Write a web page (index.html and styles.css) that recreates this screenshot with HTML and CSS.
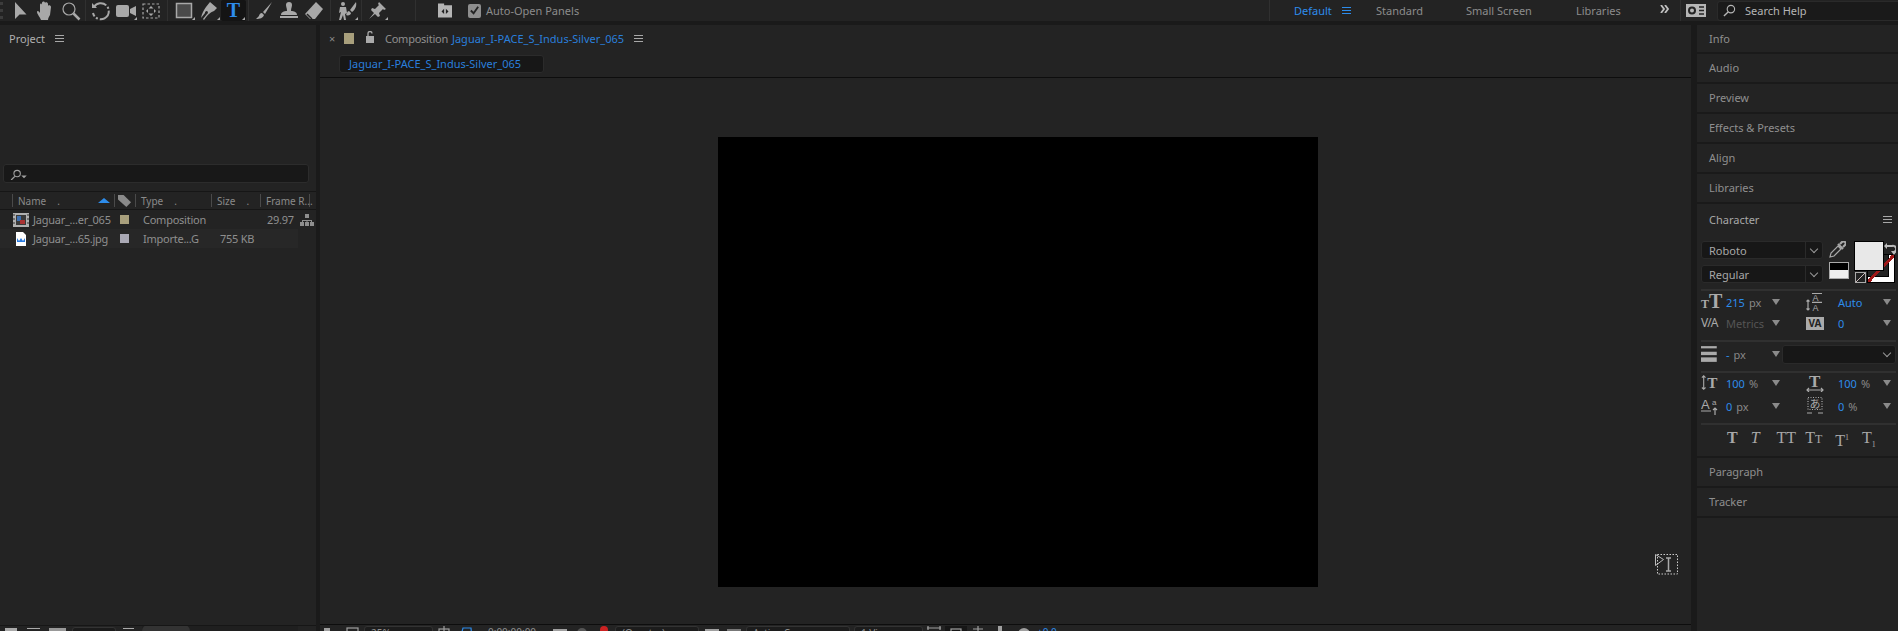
FILE: index.html
```html
<!DOCTYPE html>
<html lang="en">
<head>
  <meta charset="UTF-8" />
  <title>After Effects</title>
  <link rel="stylesheet" href="styles.css">
</head>
<body>

  <header class="toolbar">
    <div class="grip"></div>
    <div class="tool"><svg viewBox="0 0 20 20"><path d="M4 1v17l4.500-4.500h7z"/></svg></div>
    <div class="tool"><svg viewBox="0 0 20 20"><path d="M5 19c-1-3-4-6-4-8s2-1 3 1V4c0-2 2-2 2 0V2c0-2 3-2 3 0v0c0-1 3-1 3 1v2c0-1 3-1 3 1l-1 8c-1 2-2 3-2 5z"/></svg></div>
    <div class="tool"><svg viewBox="0 0 20 20" class="line"><circle cx="8" cy="8" r="6"/><path d="M12.500 12.500l6 6" stroke-width="2.500"/></svg></div>
    <span class="sep"></span>
    <div class="tool"><svg viewBox="0 0 20 20" class="line"><path d="M3 6a8 8 0 1 1-1 6" stroke-width="2" stroke-dasharray="14 2 2 2"/><path d="M1 2v5h5" fill="currentColor" stroke="none"/></svg></div>
    <div class="tool more"><svg viewBox="0 0 20 20"><rect x="0" y="4" width="13" height="12" rx="2"/><path d="M14 8l6-3v10l-6-3z"/></svg></div>
    <div class="tool"><svg viewBox="0 0 20 20" class="line"><rect x="2" y="3" width="16" height="14" stroke-dasharray="2.500 2"/><path d="M10 5l-2.500 2.500h5zM10 15l-2.500-2.500h5zM5 10l2-2v4zM15 10l-2-2v4z" fill="currentColor" stroke="none"/></svg></div>
    <span class="sep wide"></span>
    <div class="tool more"><svg viewBox="0 0 20 20" class="line"><rect x="2.500" y="2.500" width="15" height="14" fill="#4a4a4a" stroke-width="1.500"/></svg></div>
    <div class="tool more"><svg viewBox="0 0 20 20"><path d="M11 1l7 6-3 3c-3 1-6 3-10 9l-1-1 4-5a1.500 1.500 0 1 0-2-1l-4 5c1-5 3-8 5-11z"/></svg></div>
    <div class="tool more active"><span class="type-tool">T</span></div>
    <span class="sep"></span>
    <div class="tool"><svg viewBox="0 0 20 20"><path d="M18 1L9 11l2 2zM8 12c-2 0-3 2-3 3l-3 3c4 0 7-1 8-4z"/></svg></div>
    <div class="tool"><svg viewBox="0 0 20 20"><rect x="1" y="15" width="18" height="2"/><path d="M7 4a3 3 0 1 1 6 0c0 2-1 3-1 6 3 0 6 1 6 4H2c0-3 3-4 6-4 0-3-1-4-1-6z"/></svg></div>
    <div class="tool"><svg viewBox="0 0 20 20"><path d="M12 1l7 7-8 10H6l-5-5z"/><path d="M3 13l5 5" stroke="#232323" stroke-width="1.500"/></svg></div>
    <span class="sep wide"></span>
    <div class="tool more"><svg viewBox="0 0 20 20"><circle cx="6" cy="3" r="2"/><path d="M3 6h6l1 6-2 1 1 6H7l-1-5-2 5H2l2-8-2 1zM19 1l-6 8 2 2c3-2 5-6 4-10zM12 10c-2 0-2 3-3 4 2 1 5 0 5-2z"/></svg></div>
    <span class="sep"></span>
    <div class="tool more"><svg viewBox="0 0 20 20"><path d="M12 1l7 7-2 1-1-1-4 4 1 3-2 1-3-3-6 5 5-6-3-3 1-2 3 1 4-4-1-1z"/></svg></div>
    <span class="sep far"></span>
    <div class="panels-btn"><svg viewBox="0 0 16 16"><path d="M0 0h7v2h9v14H0z"/><path d="M7 6L4 9l3 3zM9 6l3 3-3 3z" fill="#232323"/></svg></div>
    <label class="auto-open"><span class="check"><svg viewBox="0 0 12 12" class="line"><path d="M2 6l3 3 5-7" stroke-width="2"/></svg></span>Auto-Open Panels</label>

    <nav class="workspaces">
      <a class="current">Default</a>
      <span class="menu-icon blue"></span>
      <a>Standard</a>
      <a>Small Screen</a>
      <a>Libraries</a>
      <svg class="chevrons line" viewBox="0 0 10 8"><path d="M1 0l3 4-3 4M5 0l3 4-3 4" stroke-width="1.800"/></svg>
    </nav>
    <span class="sep-plain"></span>
    <div class="sync-btn"><svg viewBox="0 0 20 13"><rect width="20" height="13" fill="#b5b5b5"/><circle cx="6" cy="6.500" r="3" fill="none" stroke="#232323" stroke-width="2"/><path d="M13 3h5M13 6.500h5M13 10h5" stroke="#232323" stroke-width="1.500"/></svg></div>
    <div class="help-search">
      <svg viewBox="0 0 14 14" class="line"><circle cx="8.500" cy="5.500" r="4"/><path d="M5.500 8.500L1 13" stroke-width="1.500"/></svg>
      <span>Search Help</span>
    </div>
  </header>

  <main class="workspace">

    <section class="project">
      <div class="panel-title"><span class="title-text">Project</span><span class="menu-icon"></span></div>
      <div class="project-preview"></div>
      <div class="project-search">
        <svg viewBox="0 0 18 12" class="line"><circle cx="7.500" cy="5" r="3.500"/><path d="M5 8L1 12" stroke-width="1.400"/><path d="M12 7h6l-3 3z" fill="currentColor" stroke="none"/></svg>
      </div>

      <div class="file-head">
        <span class="col-name">Name<i>.</i><b class="sort-arrow"></b></span>
        <span class="col-tag"><svg viewBox="0 0 14 14"><path d="M0 1h6l8 8-5 5-9-8z"/></svg></span>
        <span class="col-type">Type<i>.</i></span>
        <span class="col-size">Size<i>.</i></span>
        <span class="col-rate">Frame R...</span>
      </div>

      <div class="file-row">
        <span class="file-icon"><svg viewBox="0 0 16 14"><rect width="16" height="14" fill="#b0b0b0"/><rect x="3" y="2" width="10" height="10" fill="#3a3a3a"/><rect x="4" y="3" width="4" height="5" fill="#3d6fb0"/><rect x="7" y="7" width="5" height="4" fill="#a33"/><path d="M1 1v2M1 5v2M1 9v2M15 1v2M15 5v2M15 9v2" stroke="#333"/></svg></span>
        <span class="file-name">Jaguar_...er_065</span>
        <span class="swatch comp"></span>
        <span class="file-type">Composition</span>
        <span class="file-size"></span>
        <span class="file-rate">29.97</span>
        <span class="flow-icon"><svg viewBox="0 0 14 12"><rect x="5" y="0" width="4" height="4"/><rect x="0" y="8" width="4" height="4"/><rect x="5" y="8" width="4" height="4"/><rect x="10" y="8" width="4" height="4"/><path d="M7 4v2H2v2h1V7h3.500v1h1V7H11v1h1V6H7z"/></svg></span>
      </div>
      <div class="file-row alt">
        <span class="file-icon"><svg viewBox="0 0 16 14"><path d="M3 0h7l3 3v11H3z" fill="#fff"/><path d="M4 6l2 3 2-3 2 3 2-3v4H4z" fill="#2a7be0"/></svg></span>
        <span class="file-name">Jaguar_...65.jpg</span>
        <span class="swatch still"></span>
        <span class="file-type">Importe...G</span>
        <span class="file-size">755 KB</span>
      </div>

      <div class="project-spacer"></div>
      <div class="project-foot">
        <span class="foot-icon flat"></span>
        <span class="foot-icon folder"></span>
        <span class="foot-icon comp-btn"></span>
        <span class="foot-drop"></span>
        <span class="foot-icon trash"></span>
        <div class="foot-scroll"><span></span></div>
      </div>
    </section>

    <section class="composition">
      <div class="comp-title">
        <span class="close">×</span>
        <span class="swatch comp big"></span>
        <svg class="lock" viewBox="0 0 10 12"><rect x="1" y="5" width="8" height="7"/><path d="M3 5V2.500a2 2 0 0 1 4 0" fill="none" stroke="currentColor" stroke-width="1.300"/></svg>
        <span class="title-text">Composition</span>
        <a class="comp-name">Jaguar_I-PACE_S_Indus-Silver_065</a>
        <span class="menu-icon"></span>
      </div>
      <div class="comp-tabs"><a class="comp-tab">Jaguar_I-PACE_S_Indus-Silver_065</a></div>
      <div class="viewer"><div class="canvas"></div></div>
      <div class="viewer-foot">
        <span class="vf-icon"><svg viewBox="0 0 14 14"><rect x="0" y="2" width="6" height="10"/><rect x="7" y="6" width="2" height="6"/></svg></span>
        <span class="vf-icon"><svg viewBox="0 0 14 14" class="line"><rect x="1" y="2" width="11" height="11"/></svg></span>
        <span class="vf-drop zoom-drop">25%</span>
        <span class="vf-icon"><svg viewBox="0 0 14 14" class="line"><rect x="2" y="3" width="10" height="10"/><path d="M7 0v14M0 7h14"/></svg></span>
        <span class="vf-icon blue"><svg viewBox="0 0 14 14" class="line"><path d="M1 13L4 2h8l1 11"/></svg></span>
        <span class="vf-time">0:00:00:00</span>
        <span class="vf-icon"><svg viewBox="0 0 14 14"><rect x="0" y="3" width="14" height="11"/></svg></span>
        <span class="vf-icon dim"><svg viewBox="0 0 14 14"><circle cx="7" cy="7" r="5"/></svg></span>
        <span class="vf-icon"><svg viewBox="0 0 14 14"><circle cx="7" cy="4" r="4" fill="#c22"/><circle cx="4" cy="11" r="3" fill="#3a3"/><circle cx="10" cy="11" r="3" fill="#26c"/></svg></span>
        <span class="vf-drop quality-drop">(Quarter)</span>
        <span class="vf-icon"><svg viewBox="0 0 14 14"><rect x="0" y="3" width="14" height="11"/></svg></span>
        <span class="vf-icon"><svg viewBox="0 0 14 14"><rect x="0" y="3" width="14" height="11" fill="#777"/></svg></span>
        <span class="vf-drop camera-drop">Active Camera</span>
        <span class="vf-drop view-drop">1 View</span>
        <span class="vf-icon"><svg viewBox="0 0 14 14" class="line"><path d="M0 2h14M1 0v4M13 0v4"/></svg></span>
        <span class="vf-icon on"><svg viewBox="0 0 14 14" class="line"><rect x="2" y="3" width="10" height="10"/></svg></span>
        <span class="vf-icon"><svg viewBox="0 0 14 14" class="line"><path d="M2 3h10M7 0v14"/></svg></span>
        <span class="vf-icon"><svg viewBox="0 0 14 14"><rect x="5" y="0" width="4" height="8"/></svg></span>
        <span class="vf-icon wide-gap"><svg viewBox="0 0 14 14"><circle cx="7" cy="8" r="6"/></svg></span>
        <span class="vf-value">+0.0</span>
      </div>
      <div class="type-cursor">
        <svg viewBox="0 0 24 21">
          <path d="M0.500 0.500v11l8-6z" fill="#222" stroke="#bbb"/>
          <rect x="2.500" y="0.500" width="20" height="19.500" fill="none" stroke="#ccc" stroke-dasharray="1.500 1.500"/>
          <path d="M11 4h5M11 17h5M13.500 4v13" fill="none" stroke="#aaa" stroke-width="1.500"/>
        </svg>
      </div>
    </section>

    <aside class="side">
      <div class="side-row">Info</div>
      <div class="side-row">Audio</div>
      <div class="side-row">Preview</div>
      <div class="side-row">Effects &amp; Presets</div>
      <div class="side-row">Align</div>
      <div class="side-row">Libraries</div>

      <section class="character">
        <div class="char-title"><span>Character</span><span class="menu-icon"></span></div>

        <div class="font-block">
          <div class="font-selects">
            <div class="select">Roboto</div>
            <div class="select">Regular</div>
          </div>
          <div class="picker-tools">
            <svg viewBox="0 0 17 17" class="line"><path d="M1 16l1-4 7-7 3 3-7 7z"/><path d="M9 3l5 5M11 3l2-2a2 2 0 0 1 3 3l-2 2" stroke-width="2.200"/></svg>
            <span class="fill-none"></span>
          </div>
          <div class="colors">
            <span class="stroke-swatch"></span>
            <span class="fill-swatch"></span>
            <span class="mini-swatch"></span>
            <svg class="swap" viewBox="0 0 12 12"><path d="M2 3h6a3 3 0 0 1 2 6" fill="none" stroke="#bbb" stroke-width="2"/><path d="M3 0v6L0 3zM7 8h6l-3 4z" fill="#bbb"/></svg>
          </div>
        </div>

        <div class="char-fields size-rows">
          <div class="field"><span class="f-icon serif big">T<small>T</small></span><b>215</b><em>px</em><i class="caret"></i></div>
          <div class="field right"><span class="f-icon"><svg viewBox="0 0 18 18" class="line"><path d="M2 7v10M.5 8.500L2 7l1.500 1.500M.5 15.500L2 17l1.500-1.500"/><text x="6.500" y="8" font-size="9">A</text><text x="6.500" y="17.500" font-size="9">A</text><path d="M6 9.300h10M6 .5h10"/></svg></span><b>Auto</b><i class="caret"></i></div>
          <div class="field"><span class="f-icon tracking">V/A</span><em class="dim">Metrics</em><i class="caret"></i></div>
          <div class="field right"><span class="f-icon boxed">VA</span><b>0</b><i class="caret"></i></div>
        </div>

        <div class="char-fields stroke-row">
          <div class="field"><span class="f-icon"><svg viewBox="0 0 16 14"><rect y="0" width="14" height="2"/><rect y="5" width="14" height="3"/><rect y="10" width="14" height="4"/></svg></span><b>-</b><em>px</em><i class="caret"></i></div>
          <div class="select plain"></div>
        </div>

        <div class="char-fields scale-rows">
          <div class="field"><span class="f-icon"><svg viewBox="0 0 20 18" class="line"><path d="M3 1v15M1 3l2-2 2 2M1 14l2 2 2-2"/><text class="st" x="7" y="15" font-size="17">T</text></svg></span><b>100</b><em>%</em><i class="caret"></i></div>
          <div class="field right"><span class="f-icon"><svg viewBox="0 0 18 18" class="line"><text class="st" x="3" y="13" font-size="17">T</text><path d="M1 16h16M3 14l-2 2 2 2M15 14l2 2-2 2"/></svg></span><b>100</b><em>%</em><i class="caret"></i></div>
          <div class="field"><span class="f-icon"><svg viewBox="0 0 18 18" class="line"><text x="0" y="12" font-size="13">A</text><text x="11" y="8" font-size="8">a</text><path d="M0 14h10M14 18v-7M12 13l2-2 2 2"/></svg></span><b>0</b><em>px</em><i class="caret"></i></div>
          <div class="field right"><span class="f-icon"><svg viewBox="0 0 18 18" class="line"><rect x="2" y=".5" width="14" height="12" stroke-dasharray="1 1.500"/><text class="kana" x="3.500" y="10.500" font-size="11">あ</text><path d="M1 16h5M12 16h5" /></svg></span><b>0</b><em>%</em><i class="caret"></i></div>
        </div>

        <div class="char-fields styles">
          <span class="bold">T</span>
          <span class="italic">T</span>
          <span class="all-caps">TT</span>
          <span>T<small>T</small></span>
          <span>T<sup>1</sup></span>
          <span>T<sub>1</sub></span>
        </div>
      </section>

      <div class="side-row">Paragraph</div>
      <div class="side-row">Tracker</div>
    </aside>

  </main>

</body>
</html>
```

FILE: styles.css
```css
* { margin: 0; padding: 0; box-sizing: border-box; }
html, body { height: 631px; overflow: hidden; }
body { font-family: "Noto Sans", sans-serif; font-size: 11px; background: #1a1a1a; color: #9a9a9a; }
svg { display: block; fill: currentColor; }
svg.line { fill: none; stroke: currentColor; stroke-width: 1.2; }
svg.line text { fill: currentColor; stroke: none; font-family: "Liberation Sans", sans-serif; }
svg.line text.st { font-family: "Liberation Serif", serif; font-weight: bold; }
svg.line text.kana { font-family: "Noto Sans CJK JP", sans-serif; }
a { text-decoration: none; }

/* top bar */
.toolbar { display: flex; align-items: center; height: 21px; background: #232323; color: #a8a8a8; overflow: hidden; }
.grip { width: 3px; height: 17px; margin-right: 5px; border-left: 3px dotted #3c3c3c; }
.tool { position: relative; display: flex; align-items: center; justify-content: center; width: 25px; height: 21px; flex: none; }
.tool svg { width: 20px; height: 20px; }
.tool.more::after { content: ""; position: absolute; right: 1px; bottom: 1px; border-style: solid; border-width: 0 0 3px 3px; border-color: transparent transparent #aaa transparent; }
.tool.active { background: #141414; border-radius: 2px; }
.type-tool { font-family: "Liberation Serif", serif; font-weight: bold; font-size: 20px; line-height: 21px; color: #2d8ceb; }
.sep { width: 1px; height: 21px; margin: 0 2px; background: #303030; flex: none; }
.sep.wide { margin: 0 3px 0 4px; }
.sep.far { margin: 0 0 0 26px; }
.panels-btn { width: 14px; margin-left: 22px; color: #b5b5b5; flex: none; }
.panels-btn svg { width: 14px; height: 15px; }
.auto-open { display: flex; align-items: center; margin-left: 16px; gap: 5px; font-size: 11px; color: #8c8c8c; white-space: nowrap; }
.check { width: 13px; height: 14px; border-radius: 2px; background: #8e8e8e; color: #232323; padding: 1px; }
.check svg { width: 11px; height: 11px; }

.workspaces { display: grid; grid-template-columns: 48px 34px 90px 110px 84px 20px; align-items: center; height: 21px; margin-left: auto; padding-left: 24px; border-left: 1px solid #303030; font-size: 11px; color: #8c8c8c; }
.workspaces .current { color: #2d8ceb; }
.chevrons { width: 10px; height: 8px; margin-top: -3px; color: #c0c0c0; }
.sep-plain { width: 1px; height: 21px; background: #303030; flex: none; }
.sync-btn { width: 20px; margin: 0 11px 0 5px; flex: none; }
.sync-btn svg { width: 20px; height: 13px; }
.help-search { display: flex; align-items: center; gap: 9px; width: 181px; height: 20px; padding-left: 5px; background: #1a1a1a; border-radius: 3px 0 0 3px; border: 1px solid #2a2a2a; border-right: 0; color: #b5b5b5; font-size: 11px; flex: none; }
.help-search svg { width: 13px; height: 13px; }

.menu-icon { display: block; width: 9px; height: 7px; border-top: 1px solid #a8a8a8; border-bottom: 1px solid #a8a8a8; position: relative; }
.menu-icon::after { content: ""; position: absolute; left: 0; right: 0; top: 2px; height: 1px; background: #a8a8a8; }
.menu-icon.blue { border-color: #2d8ceb; }
.menu-icon.blue::after { background: #2d8ceb; }

/* panels */
.workspace { display: flex; height: 606px; margin-top: 4px; gap: 4px; }
.project { display: flex; flex-direction: column; width: 316px; background: #232323; flex: none; }
.composition { position: relative; display: flex; flex-direction: column; width: 1371px; background: #232323; flex: none; }
.side { width: 201px; margin-left: 2px; background: #232323; flex: none; }

.panel-title { display: flex; align-items: center; gap: 10px; height: 27px; padding-left: 9px; color: #b0b0b0; }
.project-preview { height: 112px; }
.project-search { height: 19px; margin: 0 7px 0 3px; padding: 4px 6px; background: #181818; border: 1px solid #2c2c2c; border-radius: 3px; color: #a0a0a0; }
.project-search svg { width: 17px; height: 11px; }

.file-head { display: grid; grid-template-columns: 102px 21px 76px 49px 50px; align-items: center; height: 19px; margin-top: 8px; margin-left: 12px; padding-right: 5px; background: #232323; position: relative; font-size: 10px; color: #8a8a8a; }
.file-head::before { content: ""; position: absolute; top: 0; bottom: 0; left: -12px; right: 0; border-top: 1px solid #161616; border-bottom: 1px solid #161616; }
.file-head > span { display: flex; align-items: center; height: 13px; border-left: 1px solid #4a4a4a; padding-left: 5px; white-space: nowrap; }
.file-head > span:last-child { border-right: 1px solid #4a4a4a; width: 50px; }
.file-head i { margin-left: 11px; font-style: normal; }
.sort-arrow { margin-left: auto; margin-right: 4px; border-style: solid; border-width: 0 6px 5px 6px; border-color: transparent transparent #2d8ceb transparent; }
.col-tag { color: #8a8a8a; padding-left: 3px !important; }
.col-tag svg { width: 13px; height: 13px; }

.file-row { display: grid; grid-template-columns: 13px 16px 4px 87px 10px 13px 77px 47px 33px 14px; align-items: center; width: 314px; height: 19px; font-size: 11px; letter-spacing: -0.25px; color: #8f8f8f; white-space: nowrap; }
.file-row.alt { width: 298px; background: #272727; }
.file-icon { grid-column: 2; }
.file-icon svg { width: 16px; height: 14px; }
.file-name { grid-column: 4; }
.file-row .swatch { grid-column: 5; }
.file-type { grid-column: 7; }
.file-size { grid-column: 8; }
.file-rate { grid-column: 9; }
.flow-icon { grid-column: 10; }
.flow-icon svg { width: 14px; height: 12px; }
.swatch { display: block; width: 9px; height: 9px; }
.swatch.comp { background: #a89f7c; }
.swatch.still { background: #aaa9b5; }
.swatch.big { width: 10px; height: 11px; }
.project-spacer { flex: 1; }
.project-foot { display: flex; align-items: flex-start; height: 6px; border-top: 1px solid #161616; padding-left: 5px; overflow: hidden; }
.foot-icon { display: block; height: 6px; margin-top: 2px; flex: none; }
.foot-icon.flat { width: 12px; background: #aaa; }
.foot-icon.folder { width: 13px; margin-left: 10px; border-top: 1px solid #aaa; }
.foot-icon.comp-btn { width: 17px; margin-left: 9px; background: #999; }
.foot-drop { width: 44px; height: 6px; margin: 1px 0 0 6px; border: 1px solid #333; background: #1b1b1b; border-radius: 3px 3px 0 0; flex: none; }
.foot-icon.trash { width: 11px; margin-left: 7px; border-top: 1px solid #aaa; }
.foot-scroll { width: 156px; height: 6px; margin-left: 8px; margin-top: -1px; background: #1f1f1f; flex: none; }
.foot-scroll span { display: block; width: 48px; height: 6px; background: #333; border-radius: 6px 6px 0 0; }

.comp-title { display: flex; align-items: center; height: 27px; padding-left: 9px; color: #8f8f8f; }
.close { width: 15px; font-size: 11px; color: #888; }
.lock { width: 10px; height: 12px; margin: -4px 0 0 11px; color: #aaa; }
.comp-title .title-text { margin-left: 10px; letter-spacing: -0.25px; }
.comp-name { margin-left: 4px; color: #2a7fdc; }
.comp-title .menu-icon { margin-left: 10px; }
.comp-tabs { height: 26px; padding: 3px 0 0 19px; border-bottom: 1px solid #0d0d0d; }
.comp-tab { display: block; width: 205px; height: 18px; padding-left: 9px; line-height: 16px; color: #2a7fdc; background: #171717; border: 1px solid #2b2b2b; border-radius: 3px; }
.viewer { flex: 1; padding: 59px 0 0 398px; }
.canvas { width: 600px; height: 450px; background: #000; }

.viewer-foot { display: flex; align-items: flex-start; height: 7px; border-top: 1px solid #0d0d0d; padding-top: 1px; overflow: hidden; font-size: 10px; line-height: 12px; color: #8f8f8f; white-space: nowrap; }
.vf-icon { display: block; width: 22px; padding: 0 4px; color: #a0a0a0; flex: none; }
.vf-icon.blue { color: #2d8ceb; }
.vf-icon.dim { color: #555; }
.vf-icon.on { background: #161616; }
.vf-icon.wide-gap { margin-left: 2px; }
.vf-icon svg { width: 14px; height: 14px; }
.vf-drop { display: block; height: 16px; padding: 0 0 0 6px; border: 1px solid #333; border-radius: 3px; background: #1c1c1c; flex: none; }
.zoom-drop { width: 69px; }
.quality-drop { width: 84px; margin-right: 2px; }
.camera-drop { width: 104px; margin-left: 1px; }
.view-drop { width: 69px; margin-left: 4px; }
.vf-time { width: 72px; padding-left: 11px; flex: none; }
.vf-value { color: #2d8ceb; margin-left: 2px; }

.type-cursor { position: absolute; left: 1335px; top: 529px; width: 24px; height: 21px; }

/* right column */
.side-row { display: flex; align-items: center; height: 30px; padding: 0 0 1px 12px; border-bottom: 2px solid #1a1a1a; color: #8f8f8f; }
.side-row:first-child { height: 29px; }
.character { height: 254px; border-bottom: 2px solid #1a1a1a; }
.char-title { display: flex; align-items: center; justify-content: space-between; height: 30px; padding: 0 6px 0 12px; color: #a8a8a8; }
.font-block { display: flex; height: 43px; padding-left: 4px; margin-top: 7px; }
.font-selects { display: flex; flex-direction: column; gap: 6px; width: 122px; flex: none; }
.select { height: 18px; padding-left: 7px; line-height: 17px; background: #171717; border: 1px solid #2a2a2a; border-radius: 3px; color: #a8a8a8; position: relative; }
.select::after { content: ""; position: absolute; right: 5px; top: 4px; width: 5px; height: 5px; border-right: 1px solid #999; border-bottom: 1px solid #999; transform: rotate(45deg); }
.select::before { content: ""; position: absolute; right: 16px; top: 0; bottom: 0; width: 1px; background: #2a2a2a; }
.select.plain { width: 114px; height: 19px; }
.select.plain::before { display: none; }
.picker-tools { display: flex; flex-direction: column; gap: 4px; margin-left: 6px; width: 20px; color: #a8a8a8; flex: none; }
.picker-tools svg { width: 17px; height: 17px; }
.fill-none { display: block; width: 20px; height: 17px; border: 1px solid #aaa; background: linear-gradient(#000 50%, #eee 50%); }
.colors { position: relative; width: 42px; margin-left: 5px; flex: none; }
.fill-swatch { position: absolute; left: 0; top: 0; width: 30px; height: 30px; background: #e8e8e8; border: 1px solid #000; }
.stroke-swatch { position: absolute; left: 13px; top: 13px; width: 28px; height: 29px; border: 1px solid #000; background: #fff; }
.stroke-swatch::before { content: ""; position: absolute; left: -1px; top: -1px; width: 20px; height: 21px; background: #232323; border: 1px solid #000; }
.stroke-swatch::after { content: ""; position: absolute; inset: 0; background: linear-gradient(to bottom right, transparent 46%, #a01818 46%, #a01818 54%, transparent 54%); }
.mini-swatch { position: absolute; left: 1px; top: 31px; width: 11px; height: 11px; border: 1px solid #aaa; background: linear-gradient(to bottom right, #222 45%, #cbb 45%, #cbb 55%, #222 55%); }
.swap { position: absolute; left: 30px; top: 2px; width: 12px; height: 12px; }

.char-fields { display: grid; grid-template-columns: 105px 1fr; margin: 7px 2px 0 4px; border-top: 2px solid #303030; }
.size-rows { margin-top: 5px; padding-top: 1px; row-gap: 1px; }
.stroke-row { grid-template-columns: 81px 1fr; align-items: center; padding-top: 2px; }
.scale-rows { row-gap: 3px; }
.field { display: flex; align-items: center; height: 20px; width: 79px; color: #8f8f8f; }
.field.right { width: 90px; }
.field b { font-weight: normal; color: #2d8ceb; }
.field em { font-style: normal; margin-left: 4px; color: #888; }
.field em.dim { margin-left: 0; color: #555; }
.f-icon { width: 25px; flex: none; color: #aaa; font-size: 13px; line-height: 18px; white-space: nowrap; }
.f-icon svg { width: 18px; height: 18px; }
.field.right .f-icon { width: 32px; }
.f-icon.serif { font-family: "Liberation Serif", serif; font-weight: bold; font-size: 12px; }
.f-icon.big small { font-size: 20px; }
.f-icon.tracking { font-size: 12px; letter-spacing: -1px; }
.field.right .f-icon.boxed { width: 18px; height: 13px; margin-right: 14px; font-size: 10px; font-weight: bold; line-height: 13px; text-align: center; background: #aaa; color: #232323; }
.caret { margin-left: auto; border-style: solid; border-width: 6px 4px 0 4px; border-color: #8a8a8a transparent transparent transparent; }
.field.right .caret { margin-right: 5px; }

.char-fields.styles { display: flex; gap: 13px; padding: 3px 0 0 26px; font-family: "Liberation Serif", serif; font-size: 16px; color: #a8a8a8; line-height: 20px; }
.styles .bold { font-weight: bold; }
.styles .italic { font-style: italic; }
.styles .all-caps { margin: 0 -4px 0 4px; }
.styles small { font-size: 12px; }
.styles sup, .styles sub { font-size: 8px; }
```
